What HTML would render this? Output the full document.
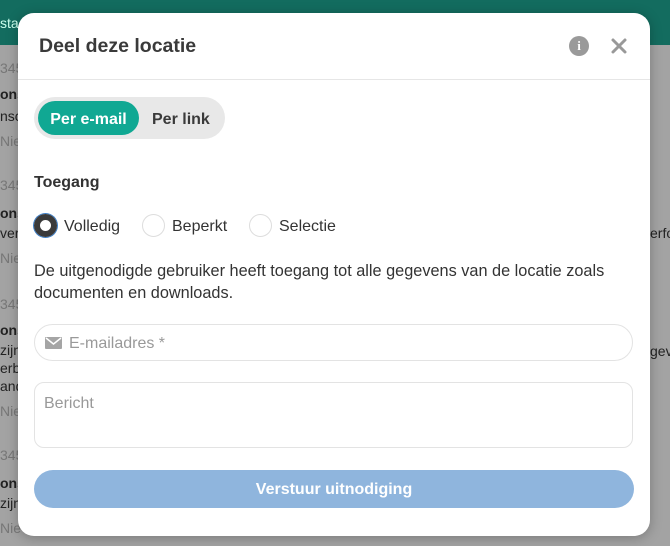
<!DOCTYPE html>
<html><head><meta charset="utf-8"><style>
*{box-sizing:border-box;margin:0;padding:0}
body{width:670px;height:546px;overflow:hidden;background:#a3a3a3;font-family:"Liberation Sans",sans-serif;position:relative}
.top{position:absolute;left:0;top:0;width:670px;height:45px;background:#136c5f}
.bg{position:absolute;font-size:14px;color:#222}
.modal{position:absolute;left:18px;top:13px;width:632px;height:523px;background:#fff;border-radius:16px;box-shadow:0 2px 12px rgba(0,0,0,.25)}
.hdr{height:67px;border-bottom:1px solid #e6e6e6;position:relative}
.hdr h1{position:absolute;left:21px;top:22px;font-size:19.5px;font-weight:bold;color:#3a3a3a}
.info{position:absolute;left:551px;top:23px;width:20px;height:20px;border-radius:50%;background:#9a9a9a;color:#fff;font-size:13px;font-weight:bold;text-align:center;line-height:20px;font-family:"Liberation Serif",serif}
.close{position:absolute;left:592px;top:24px}
.tabs{position:absolute;left:16px;top:84px;width:191px;height:42px;border-radius:21px;background:#e8e8e8}
.tab1{position:absolute;left:4px;top:6px;width:101px;height:34px;border-radius:17px;background:#10a893;color:#fff;font-size:16px;font-weight:bold;text-align:center;line-height:30px;top:4px;padding-top:4px}
.tab2{position:absolute;left:118px;top:8px;line-height:30px;font-size:16px;font-weight:bold;color:#3a3a3a}
.lbl{position:absolute;left:16px;top:161px;font-size:16px;color:#333;font-weight:bold}
.r{position:absolute;top:201px;width:23px;height:23px;border-radius:50%;border:1px solid #ddd}
.rt{position:absolute;top:205px;font-size:16px;color:#333}
.desc{position:absolute;left:16px;top:247px;width:610px;font-size:16.3px;line-height:22px;color:#333}
.in{position:absolute;left:16px;top:311px;width:599px;height:37px;border:1px solid #e3e3e3;border-radius:19px}
.in span{position:absolute;left:34px;top:10px;font-size:16px;color:#999}
.ta{position:absolute;left:16px;top:369px;width:599px;height:66px;border:1px solid #e3e3e3;border-radius:10px}
.ta span{position:absolute;left:9px;top:12px;font-size:16px;color:#999}
.btn{position:absolute;left:16px;top:457px;width:600px;height:38px;border-radius:19px;background:#8fb5dd;color:#fff;font-size:16px;font-weight:bold;text-align:center;line-height:40px}
</style></head><body>
<div class="top"></div>
<div class="bg" style="left:0;top:15px;color:#cfe">sta</div>
<div class="bg" style="left:0;top:60px;color:#777">345</div>
<div class="bg" style="left:0;top:86px;font-weight:bold">ons</div>
<div class="bg" style="left:0;top:108px">nsc</div>
<div class="bg" style="left:0;top:133px;color:#777">Nie</div>
<div class="bg" style="left:0;top:177px;color:#777">345</div>
<div class="bg" style="left:0;top:205px;font-weight:bold">ons</div>
<div class="bg" style="left:0;top:225px">vers</div>
<div class="bg" style="left:0;top:250px;color:#777">Nie</div>
<div class="bg" style="left:650px;top:225px">erfo</div>
<div class="bg" style="left:650px;top:343px">gev</div>
<div class="bg" style="left:0;top:296px;color:#777">345</div>
<div class="bg" style="left:0;top:322px;font-weight:bold">ons</div>
<div class="bg" style="left:0;top:342px">zijn</div>
<div class="bg" style="left:0;top:360px">erb</div>
<div class="bg" style="left:0;top:378px">and</div>
<div class="bg" style="left:0;top:403px;color:#777">Nie</div>
<div class="bg" style="left:0;top:447px;color:#777">345</div>
<div class="bg" style="left:0;top:475px;font-weight:bold">ons</div>
<div class="bg" style="left:0;top:495px">zijn</div>
<div class="bg" style="left:0;top:520px;color:#777">Nie</div>
<div class="modal">
 <div class="hdr"><h1>Deel deze locatie</h1><div class="info">i</div>
 <svg class="close" width="18" height="18" viewBox="0 0 18 18"><path d="M3 3L15 15M15 3L3 15" stroke="#999" stroke-width="3" stroke-linecap="round"/></svg></div>
 <div class="tabs"><div class="tab1">Per e-mail</div><div class="tab2">Per link</div></div>
 <div class="lbl">Toegang</div>
 <div class="r" style="left:16px;border:6px solid #3a3a3a;box-shadow:0 0 0 1px #3d7fc8"></div><div class="rt" style="left:46px">Volledig</div>
 <div class="r" style="left:124px"></div><div class="rt" style="left:154px">Beperkt</div>
 <div class="r" style="left:231px"></div><div class="rt" style="left:261px">Selectie</div>
 <div class="desc">De uitgenodigde gebruiker heeft toegang tot alle gegevens van de locatie zoals documenten en downloads.</div>
 <div class="in"><svg style="position:absolute;left:10px;top:12px" width="17" height="12" viewBox="0 0 17 12"><rect width="17" height="12" rx="1" fill="#a5a5a5"/><path d="M1 1L8.5 7L16 1" stroke="#fff" stroke-width="1.5" fill="none"/></svg><span>E-mailadres *</span></div>
 <div class="ta"><span>Bericht</span></div>
 <div class="btn">Verstuur uitnodiging</div>
</div>
</body></html>
